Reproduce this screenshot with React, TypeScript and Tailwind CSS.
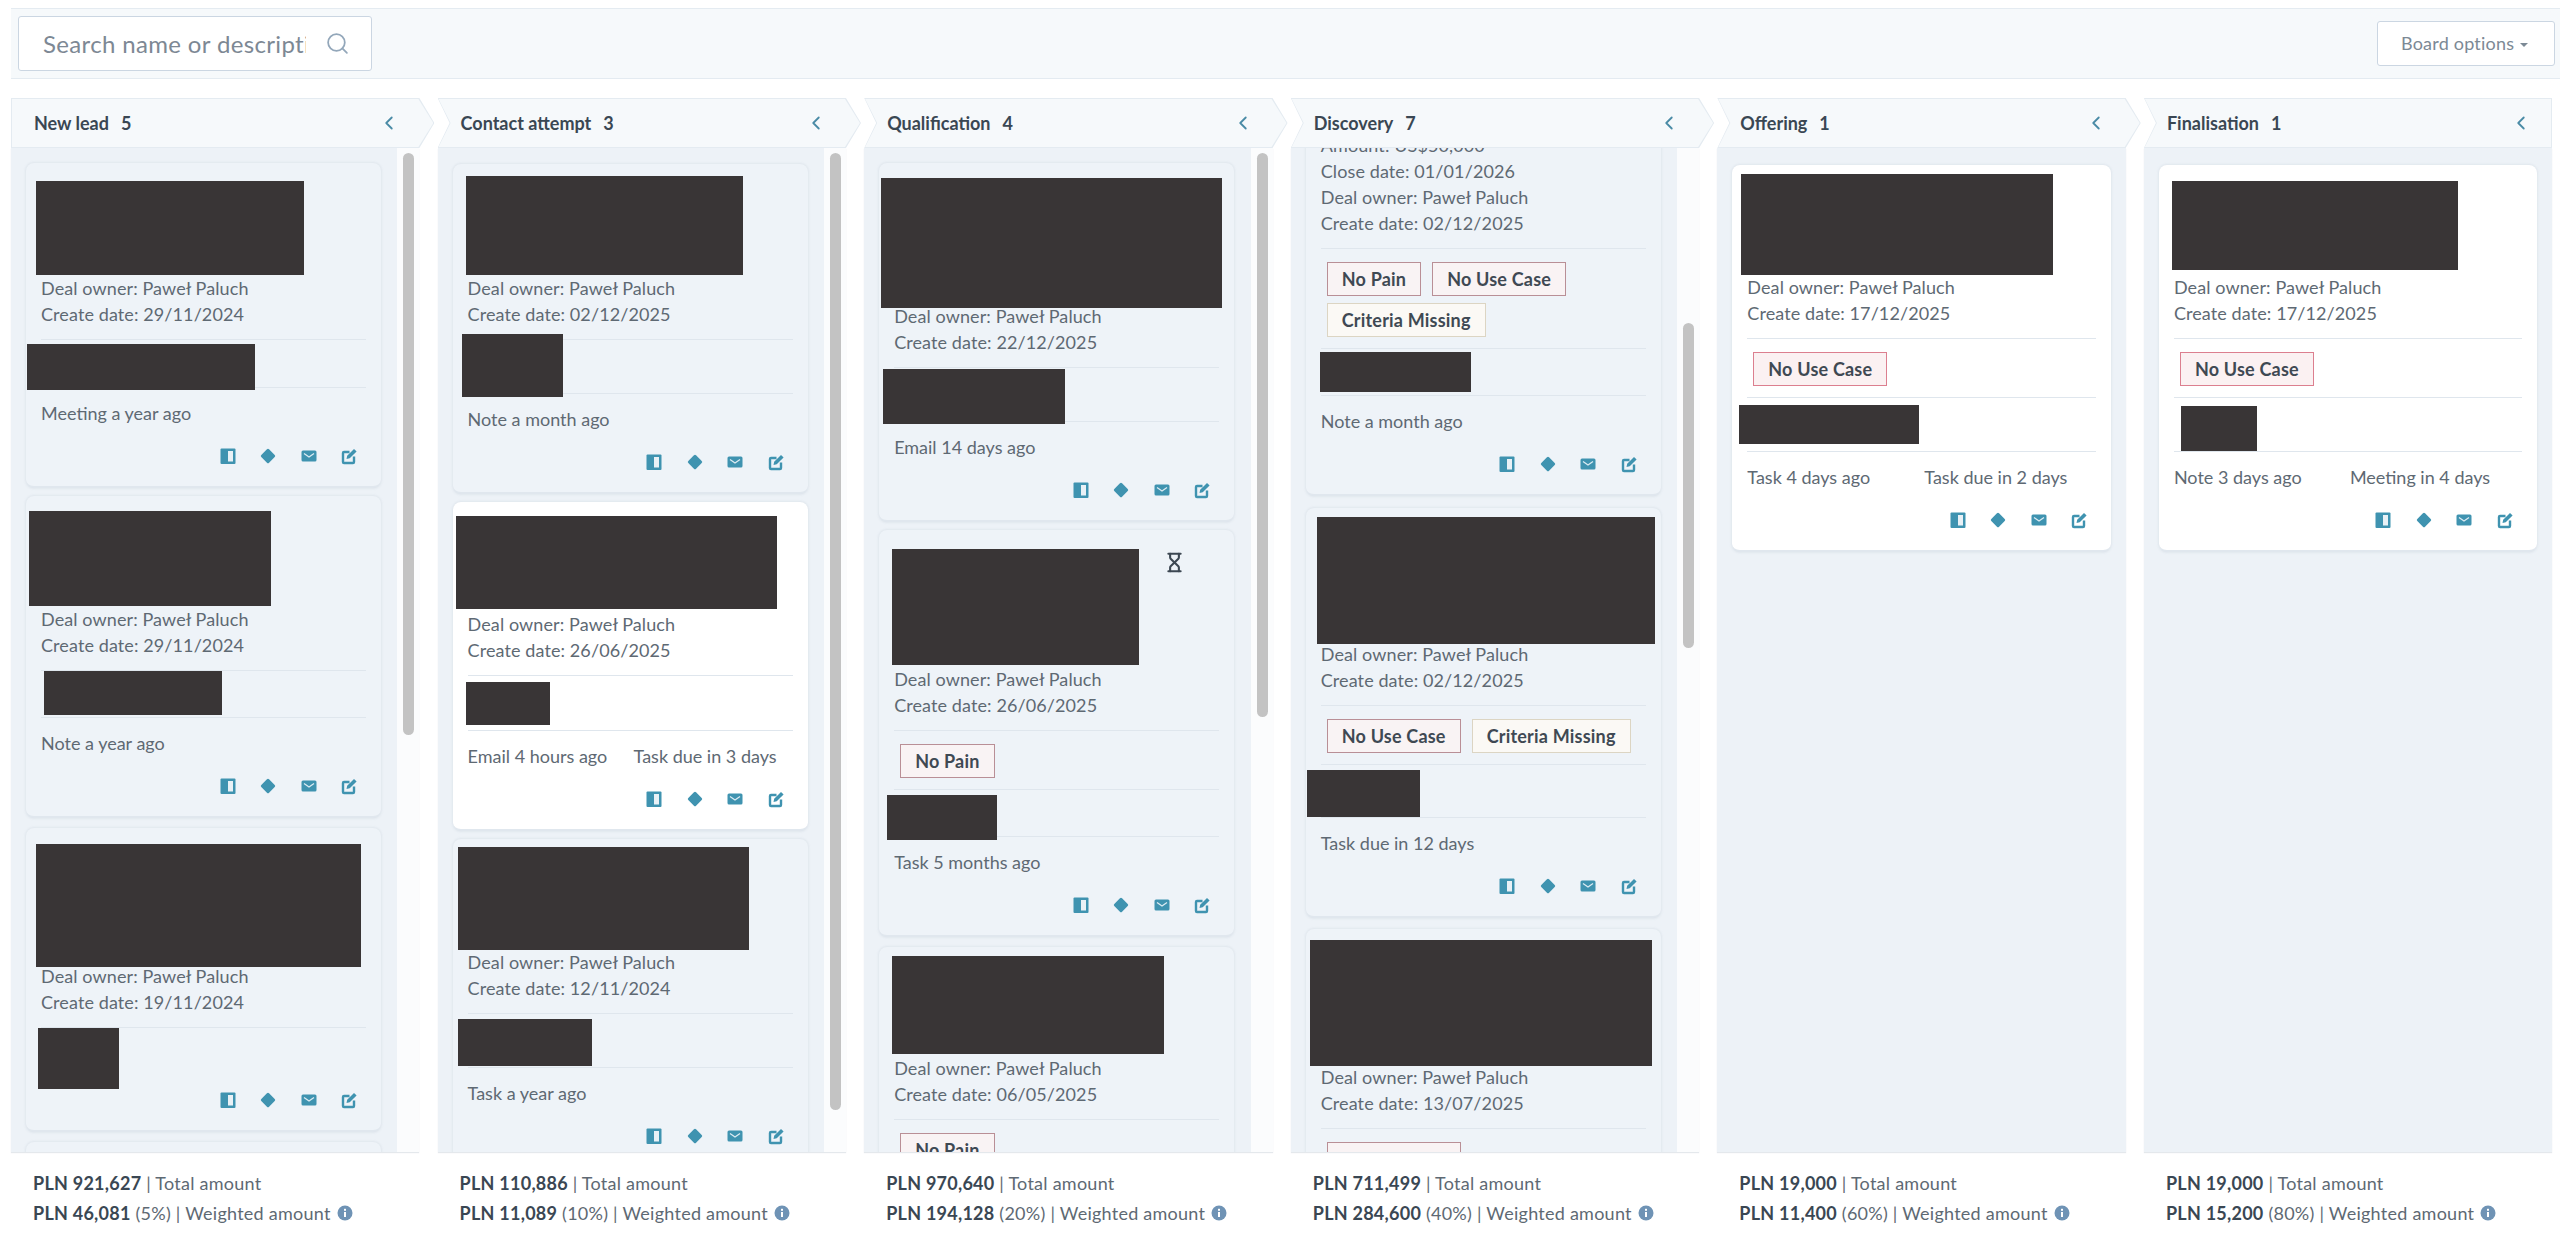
import { ChevronLeft, Hourglass, Search } from "lucide-react";

type Tag = { label: string; kind: "red" | "bright" | "cream" };
type Deal = {
  gap: string;
  width?: string;
  white?: boolean;
  titleH: string;
  lines: string[];
  tags?: Tag[];
  mid: string;
  activity?: string[];
  firstW?: string;
  covers: string[];
  waiting?: boolean;
};
type Stage = {
  name: string;
  count: number;
  total: string;
  weighted: string;
  pct: string;
  thumb?: string;
  first?: boolean;
  last?: boolean;
  deals: Deal[];
};

const owner = "Deal owner: Paweł Paluch";
const noPain: Tag = { label: "No Pain", kind: "red" };
const noUse: Tag = { label: "No Use Case", kind: "red" };
const noUseBright: Tag = { label: "No Use Case", kind: "bright" };
const criteria: Tag = { label: "Criteria Missing", kind: "cream" };

const stages: Stage[] = [
  {
    name: "New lead", count: 5, total: "PLN 921,627", weighted: "PLN 46,081", pct: "(5%)", first: true,
    thumb: "mt-[5px] h-[582px]",
    deals: [
      { gap: "mt-[15px]", titleH: "h-[112px]", lines: [owner, "Create date: 29/11/2024"], mid: "h-[48px]", activity: ["Meeting a year ago"],
        covers: ["left-[10px] top-[18px] w-[268px] h-[94px]", "left-[1px] top-[181px] w-[228px] h-[46px]"] },
      { gap: "mt-[8px]", titleH: "h-[110px]", lines: [owner, "Create date: 29/11/2024"], mid: "h-[47px]", activity: ["Note a year ago"],
        covers: ["left-[3px] top-[15px] w-[242px] h-[95px]", "left-[18px] top-[175px] w-[178px] h-[44px]"] },
      { gap: "mt-[10px]", titleH: "h-[135px]", lines: [owner, "Create date: 19/11/2024"], mid: "h-[43px]",
        covers: ["left-[10px] top-[16px] w-[325px] h-[123px]", "left-[12px] top-[200px] w-[81px] h-[61px]"] },
      { gap: "mt-[10px]", titleH: "h-[60px]", lines: [], mid: "h-[10px]", covers: [] },
    ],
  },
  {
    name: "Contact attempt", count: 3, total: "PLN 110,886", weighted: "PLN 11,089", pct: "(10%)",
    thumb: "mt-[5px] h-[957px]",
    deals: [
      { gap: "mt-[16px]", titleH: "h-[111px]", lines: [owner, "Create date: 02/12/2025"], mid: "h-[54px]", activity: ["Note a month ago"],
        covers: ["left-[13px] top-[12px] w-[277px] h-[99px]", "left-[9px] top-[170px] w-[101px] h-[63px]"] },
      { gap: "mt-[8px]", white: true, titleH: "h-[109px]", lines: [owner, "Create date: 26/06/2025"], mid: "h-[55px]", activity: ["Email 4 hours ago", "Task due in 3 days"], firstW: "w-[166px]",
        covers: ["left-[3px] top-[14px] w-[321px] h-[93px]", "left-[13px] top-[180px] w-[84px] h-[43px]"] },
      { gap: "mt-[8px]", titleH: "h-[110px]", lines: [owner, "Create date: 12/11/2024"], mid: "h-[54px]", activity: ["Task a year ago"],
        covers: ["left-[5px] top-[8px] w-[291px] h-[103px]", "left-[5px] top-[180px] w-[134px] h-[47px]"] },
    ],
  },
  {
    name: "Qualification", count: 4, total: "PLN 970,640", weighted: "PLN 194,128", pct: "(20%)",
    thumb: "mt-[5px] h-[564px]",
    deals: [
      { gap: "mt-[15px]", titleH: "h-[140px]", lines: [owner, "Create date: 22/12/2025"], mid: "h-[54px]", activity: ["Email 14 days ago"],
        covers: ["left-[2px] top-[15px] w-[341px] h-[130px]", "left-[4px] top-[206px] w-[182px] h-[55px]"] },
      { gap: "mt-[8px]", titleH: "h-[136px]", lines: [owner, "Create date: 26/06/2025"], tags: [noPain], mid: "h-[47px]", activity: ["Task 5 months ago"], waiting: true,
        covers: ["left-[13px] top-[19px] w-[247px] h-[116px]", "left-[8px] top-[265px] w-[110px] h-[45px]"] },
      { gap: "mt-[10px]", titleH: "h-[108px]", lines: [owner, "Create date: 06/05/2025"], tags: [noPain], mid: "h-[47px]",
        covers: ["left-[13px] top-[9px] w-[272px] h-[98px]"] },
    ],
  },
  {
    name: "Discovery", count: 7, total: "PLN 711,499", weighted: "PLN 284,600", pct: "(40%)",
    thumb: "mt-[175px] h-[325px]",
    deals: [
      { gap: "-mt-[16px]", titleH: "h-0", lines: ["Amount: US$50,000", "Close date: 01/01/2026", owner, "Create date: 02/12/2025"], tags: [noPain, noUse, criteria], mid: "h-[47px]", activity: ["Note a month ago"],
        covers: ["left-[14px] top-[220px] w-[151px] h-[40px]"] },
      { gap: "mt-[12px]", titleH: "h-[133px]", lines: [owner, "Create date: 02/12/2025"], tags: [noUse, criteria], mid: "h-[53px]", activity: ["Task due in 12 days"],
        covers: ["left-[11px] top-[9px] w-[338px] h-[127px]", "left-[1px] top-[262px] w-[113px] h-[47px]"] },
      { gap: "mt-[11px]", titleH: "h-[135px]", lines: [owner, "Create date: 13/07/2025"], tags: [noUse], mid: "h-[47px]",
        covers: ["left-[4px] top-[11px] w-[342px] h-[126px]"] },
    ],
  },
  {
    name: "Offering", count: 1, total: "PLN 19,000", weighted: "PLN 11,400", pct: "(60%)",
    deals: [
      { gap: "mt-[17px]", width: "w-[379px]", white: true, titleH: "h-[109px]", lines: [owner, "Create date: 17/12/2025"], tags: [noUseBright], mid: "h-[54px]", activity: ["Task 4 days ago", "Task due in 2 days"], firstW: "w-[177px]",
        covers: ["left-[9px] top-[9px] w-[312px] h-[101px]", "left-[7px] top-[240px] w-[180px] h-[39px]"] },
    ],
  },
  {
    name: "Finalisation", count: 1, total: "PLN 19,000", weighted: "PLN 15,200", pct: "(80%)", last: true,
    deals: [
      { gap: "mt-[17px]", width: "w-[378px]", white: true, titleH: "h-[109px]", lines: [owner, "Create date: 17/12/2025"], tags: [noUseBright], mid: "h-[54px]", activity: ["Note 3 days ago", "Meeting in 4 days"], firstW: "w-[176px]",
        covers: ["left-[13px] top-[16px] w-[286px] h-[89px]", "left-[22px] top-[241px] w-[76px] h-[45px]"] },
    ],
  },
];

const tagStyles = {
  red: "border-[#b98f96] bg-[#f9f3f4]",
  bright: "border-[#dc7f8f] bg-[#fbf1f2]",
  cream: "border-[#dcd5c3] bg-[#fbf9f5]",
};

const DealIcons = () => (
  <div className="mt-[20px] flex h-[20px] justify-end gap-[20.5px] pr-[22px]">
    <svg width="20" height="20" viewBox="0 0 20 20">
      <rect x="2.5" y="2.5" width="15" height="15.5" rx="1" fill="#3f93b0" />
      <rect x="10" y="5" width="5" height="10.5" fill="#e9f1f6" />
    </svg>
    <svg width="20" height="20" viewBox="0 0 20 20">
      <rect x="4.5" y="4.5" width="11" height="11" rx="1.5" fill="#3f93b0" transform="rotate(45 10 10)" />
    </svg>
    <svg width="20" height="20" viewBox="0 0 20 20">
      <rect x="2.5" y="4.5" width="15" height="11" rx="1.5" fill="#3f93b0" />
      <path d="M5 7.5l5 3.5 5-3.5" fill="none" stroke="#dcebf2" strokeWidth="1.3" />
    </svg>
    <svg width="20" height="20" viewBox="0 0 20 20">
      <path d="M15 10.5V16a1 1 0 0 1-1 1H5a1 1 0 0 1-1-1V7a1 1 0 0 1 1-1h5.5" fill="none" stroke="#3f93b0" strokeWidth="2.4" />
      <path d="M7.5 13l.7-3.2L15 3l2.6 2.5-6.9 6.8z" fill="#3f93b0" />
    </svg>
  </div>
);

const DealCard = ({ deal }: { deal: Deal }) => (
  <div
    className={`relative ml-[15px] shrink-0 rounded-lg border-b-2 border-[#e0e7ee] shadow-[0_0_3px_rgba(120,140,160,0.22)] ${deal.gap} ${deal.width ?? "w-[355px]"} ${deal.white ? "bg-white" : "bg-[#eef3f8]"}`}
  >
    <div className={deal.titleH} />
    <div className="mb-[12px] px-[15px] text-[18px] leading-[26px] tracking-[0.1px] text-[#5e6973]">
      {deal.lines.map((line) => (
        <p key={line}>{line}</p>
      ))}
    </div>
    {deal.tags && (
      <div className="mx-[15px] flex flex-wrap gap-x-[11px] gap-y-[7px] border-t border-[#dfe6ed] pt-[13px] pb-[11px] pl-[6px]">
        {deal.tags.map((tag) => (
          <span
            key={tag.label}
            className={`flex h-[34px] items-center border px-[14px] text-[18px] font-bold tracking-[0.2px] whitespace-nowrap text-[#3f4953] ${tagStyles[tag.kind]}`}
          >
            {tag.label}
          </span>
        ))}
      </div>
    )}
    <div className={`mx-[15px] border-t border-[#dfe6ed] ${deal.mid}`} />
    {deal.activity && (
      <div className="mx-[15px] box-border flex h-[39px] border-t border-[#dfe6ed] pt-[12px] text-[18px] leading-[26px] text-[#5e6973]">
        <span className={deal.firstW}>{deal.activity[0]}</span>
        {deal.activity[1] && <span>{deal.activity[1]}</span>}
      </div>
    )}
    <DealIcons />
    <div className="h-[20px]" />
    {deal.waiting && (
      <Hourglass size={21} strokeWidth={2.4} className="absolute top-[22px] left-[285px] text-[#3d4853]" />
    )}
    {deal.covers.map((cover) => (
      <div key={cover} className={`absolute bg-[#393536] ${cover}`} />
    ))}
  </div>
);

const StageHeader = ({ stage }: { stage: Stage }) => {
  const shape = stage.last
    ? "[clip-path:polygon(0_0,100%_0,100%_100%,0_100%,12px_50%)]"
    : stage.first
      ? "[clip-path:polygon(0_0,calc(100%-15px)_0,100%_50%,calc(100%-15px)_100%,0_100%)]"
      : "[clip-path:polygon(0_0,calc(100%-15px)_0,100%_50%,calc(100%-15px)_100%,0_100%,12px_50%)]";
  return (
    <div className={`z-10 h-[50px] shrink-0 bg-[#e4ebf1] p-[1px] ${stage.last ? "" : "-mr-[15px]"} ${shape}`}>
      <div className={`flex h-full items-center bg-[#f6f9fb] pl-[22px] ${stage.last ? "pr-[19px]" : "pr-[33px]"} ${shape}`}>
        <span className="text-[18px] font-bold text-[#3a4753]">{stage.name}</span>
        <span className="ml-[12px] text-[18px] font-bold text-[#3a4753]">{stage.count}</span>
        <ChevronLeft size={22} strokeWidth={2} className="ml-auto text-[#4a8ba6]" />
      </div>
    </div>
  );
};

const StageColumn = ({ stage }: { stage: Stage }) => (
  <div className="flex w-[408.4px] shrink-0 flex-col">
    <StageHeader stage={stage} />
    <div className="flex h-[1004px] shrink-0 overflow-hidden bg-[#edf2f7] shadow-[0_1px_1px_rgba(120,140,160,0.2)]">
      <div className="flex min-w-0 flex-1 flex-col overflow-hidden">
        {stage.deals.map((deal, i) => (
          <DealCard key={i} deal={deal} />
        ))}
      </div>
      {stage.thumb && (
        <div className="w-[22px] shrink-0 bg-[#fbfcfd] pl-[6px]">
          <div className={`w-[11px] rounded-full bg-[#c3c3c3] ${stage.thumb}`} />
        </div>
      )}
    </div>
    <div className="pt-[16px] pl-[22px] text-[18px] leading-[30px] tracking-[0.25px] text-[#5e6973]">
      <p>
        <b className="text-[#3a4753]">{stage.total}</b> | Total amount
      </p>
      <p className="flex items-center gap-[6px]">
        <span>
          <b className="text-[#3a4753]">{stage.weighted}</b> {stage.pct} | Weighted amount
        </span>
        <svg width="16" height="16" viewBox="0 0 16 16">
          <circle cx="8" cy="8" r="7.5" fill="#6f93b5" />
          <rect x="7" y="7" width="2" height="5" fill="#fff" />
          <rect x="7" y="3.8" width="2" height="2" fill="#fff" />
        </svg>
      </p>
    </div>
  </div>
);

const App = () => {
  return (
    <div className="h-[1239px] w-[2560px] overflow-hidden bg-white pt-[8px] font-['Lato','Liberation_Sans',sans-serif]">
      <div className="ml-[11px] flex h-[71px] items-center justify-between border-y border-[#e4ebf1] bg-[#f6f9fb] pr-[5px] pl-[7px]">
        <div className="flex h-[55px] w-[354px] items-center rounded-[3px] border border-[#cbd6e2] bg-white pl-[24px]">
          <input
            readOnly
            placeholder="Search name or description"
            className="w-[263px] bg-transparent text-[24px] tracking-[0.35px] outline-none placeholder:text-[#7d8894]"
          />
          <Search size={25} strokeWidth={1.7} className="ml-[19px] text-[#93a7ba]" />
        </div>
        <div className="flex h-[45px] w-[178px] items-center rounded-[3px] border border-[#cbd6e2] bg-white pl-[23px] text-[18px] tracking-[0.2px] text-[#7c8995]">
          Board options
          <span className="mt-[2px] ml-[6px] h-0 w-0 border-x-[4px] border-t-[4px] border-x-transparent border-t-[#7c8995]" />
        </div>
      </div>
      <div className="mt-[19px] flex gap-[18.2px] pl-[11px]">
        {stages.map((stage) => (
          <StageColumn key={stage.name} stage={stage} />
        ))}
      </div>
    </div>
  );
};

export default App;
